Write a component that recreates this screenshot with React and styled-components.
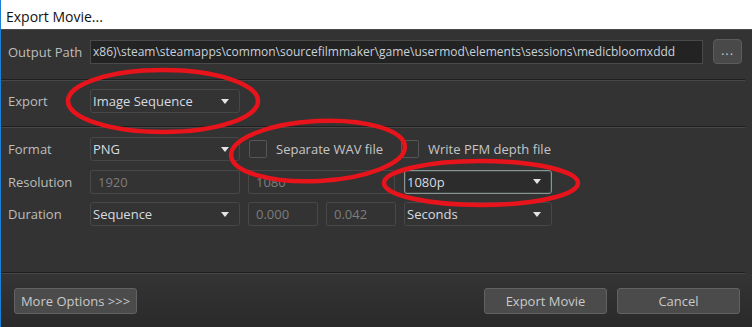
import React from "react";
import styled, { createGlobalStyle } from "styled-components";

const Global = createGlobalStyle`
  html, body { margin: 0; padding: 0; background: #333333; }
  * { box-sizing: border-box; }
`;

const Window = styled.div`
  position: relative;
  width: 752px;
  height: 327px;
  border-left: 1px solid #1a7fd6;
  background: #333333;
  font-family: "Open Sans", "Noto Sans", sans-serif;
  font-size: 13px;
  color: #c4c4c4;
  display: flex;
  flex-direction: column;
  overflow: hidden;
`;

const TitleBar = styled.div`
  height: 30px;
  background: #ffffff;
  color: #111;
  font-size: 14px;
  padding: 3px 0 0 5px;
  display: flex;
  align-items: center;
  border-bottom: 1px solid #4a4a4a;
`;

const Section = styled.div`
  display: flex;
  align-items: center;
  padding: ${(p) => p.$pad};
  border-bottom: 1px solid #1f1f1f;
  box-shadow: 0 1px 0 #474747;
  margin-right: 7px;
`;

const Label = styled.div`
  width: 89px;
  flex: none;
  padding-left: 7px;
  color: #bdbdbd;
`;

const PathInput = styled.div`
  width: 613px;
  height: 24px;
  background: #232323;
  border: 1px solid #4a4a4a;
  color: #c9d2da;
  font-size: 12px;
  display: flex;
  align-items: center;
  padding-left: 2px;
  white-space: nowrap;
  overflow: hidden;
`;

const DotsButton = styled.div`
  margin-left: 10px;
  width: 29px;
  height: 25px;
  border-radius: 4px;
  background: #494949;
  border: 1px solid #5c5c5c;
  color: #c8c8c8;
  display: flex;
  align-items: center;
  justify-content: center;
  padding-bottom: 3px;
  letter-spacing: 1px;
`;

const Combo = styled.div`
  width: ${(p) => p.$w}px;
  height: 24px;
  border: 1px solid ${(p) => (p.$focus ? "#8b9393" : "#474747")};
  border-radius: 3px;
  background: ${(p) => (p.$focus ? "#2c2c2c" : "#333333")};
  box-shadow: ${(p) => (p.$focus ? "inset 0 0 0 1px #3c4444" : "none")};
  color: #d6dbe0;
  display: flex;
  align-items: center;
  justify-content: space-between;
  padding: 0 10px 0 2px;
  flex: none;
`;

const Arrow = styled.span`
  width: 0;
  height: 0;
  border-left: 4.5px solid transparent;
  border-right: 4.5px solid transparent;
  border-top: 5px solid #e4e4e4;
`;

const Grid = styled.div`
  display: grid;
  grid-template-columns: 74px 150px 70px 70px 148px;
  grid-auto-rows: 24px;
  column-gap: 8px;
  row-gap: 8.5px;
  align-items: center;
  padding: 10px 0 46px 7px;
  border-bottom: 1px solid #1f1f1f;
  box-shadow: 0 1px 0 #474747;
  margin-right: 7px;
`;

const GridLabel = styled.div`
  color: #bdbdbd;
  white-space: nowrap;
`;

const TextField = styled.div`
  grid-column: span ${(p) => p.$span || 1};
  height: 24px;
  border: 1px solid #474747;
  border-radius: 2px;
  color: #7d7d7d;
  display: flex;
  align-items: center;
  padding-left: 7px;
  margin-right: ${(p) => (p.$span === 2 ? 1 : 0)}px;
`;

const CheckWrap = styled.label`
  grid-column: span ${(p) => p.$span || 1};
  display: flex;
  align-items: center;
  gap: 9px;
  color: #c6c6c6;
  white-space: nowrap;
  margin-left: ${(p) => p.$ml || 0}px;
`;

const Box = styled.span`
  width: 18px;
  height: 18px;
  border: 1px solid #565656;
  border-radius: 2px;
  background: #333;
  flex: none;
`;

const Footer = styled.div`
  flex: 1;
  display: flex;
  align-items: flex-start;
  padding: 14px 12px 0 13px;
  background: linear-gradient(#343434, #2a2a2a);
  margin-top: 1px;
`;

const Button = styled.div`
  width: ${(p) => p.$w}px;
  height: 26px;
  border-radius: 3px;
  background: #4b4b4b;
  border: 1px solid #626262;
  color: #c9c9c9;
  display: flex;
  align-items: center;
  justify-content: center;
  font-size: 13px;
  margin-left: ${(p) => p.$ml || 0}px;
  padding-bottom: 1px;
`;

const Spacer = styled.div`
  flex: 1;
`;

const Annotations = styled.svg`
  position: absolute;
  left: -1px;
  top: 0;
  pointer-events: none;
`;

export default function App() {
  return (
    <>
      <Global />
      <Window>
        <TitleBar>Export Movie...</TitleBar>
        <Section $pad="9px 0 15px 0">
          <Label>Output Path</Label>
          <PathInput>
            x86)\steam\steamapps\common\sourcefilmmaker\game\usermod\elements\sessions\medicbloomxddd
          </PathInput>
          <DotsButton>...</DotsButton>
        </Section>
        <Section $pad="9px 0 13px 0">
          <Label>Export</Label>
          <Combo $w={150}>
            Image Sequence
            <Arrow />
          </Combo>
        </Section>
        <Grid>
          <GridLabel>Format</GridLabel>
          <Combo $w={150}>
            PNG
            <Arrow />
          </Combo>
          <CheckWrap $span={2} $ml={1}>
            <Box />
            Separate WAV file
          </CheckWrap>
          <CheckWrap $ml={-3}>
            <Box />
            Write PFM depth file
          </CheckWrap>

          <GridLabel>Resolution</GridLabel>
          <TextField>1920</TextField>
          <TextField $span={2}>1080</TextField>
          <Combo $w={148} $focus>
            1080p
            <Arrow />
          </Combo>

          <GridLabel>Duration</GridLabel>
          <Combo $w={150}>
            Sequence
            <Arrow />
          </Combo>
          <TextField>0.000</TextField>
          <TextField>0.042</TextField>
          <Combo $w={148}>
            Seconds
            <Arrow />
          </Combo>
        </Grid>
        <Footer>
          <Button $w={123}>More Options &gt;&gt;&gt;</Button>
          <Spacer />
          <Button $w={123}>Export Movie</Button>
          <Button $w={123} $ml={10}>Cancel</Button>
        </Footer>
        <Annotations width="752" height="327" viewBox="0 0 752 327">
          <g fill="none" stroke="#e8141c" strokeWidth="4.5">
            <ellipse cx="163" cy="101" rx="95" ry="31" />
            <ellipse cx="318" cy="151" rx="87" ry="30" transform="rotate(-3 318 151)" />
            <ellipse cx="481" cy="183" rx="97" ry="22" />
          </g>
        </Annotations>
      </Window>
    </>
  );
}
